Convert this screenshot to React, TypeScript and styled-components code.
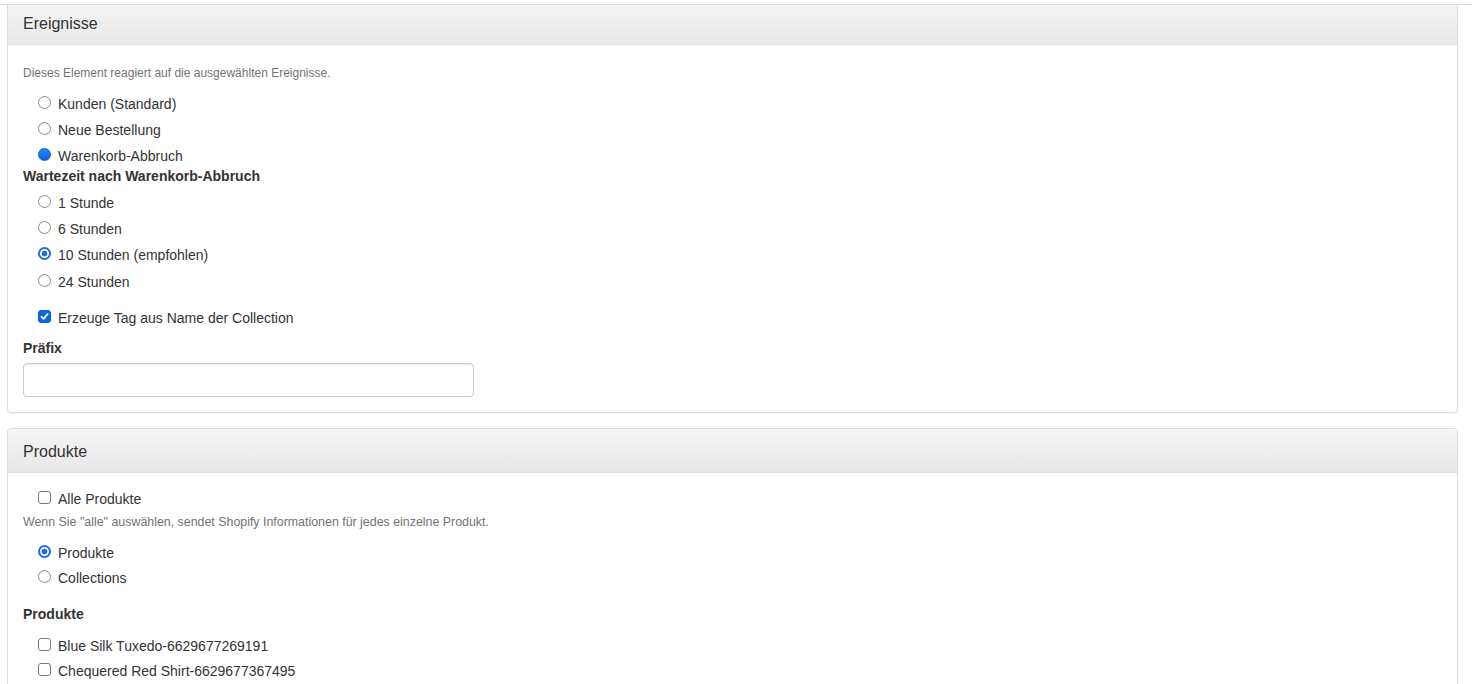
import styled, { createGlobalStyle } from "styled-components";

const GlobalStyle = createGlobalStyle`
    body {
        margin: 0;
        background: #fff;
        font-family: "Liberation Sans", Arial, sans-serif;
        font-size: 14px;
        color: #333;
    }
`;

const Page = styled.div`
    padding: 0 14px 0 7px;
`;

// thin white strip over the top of the page, the panel slides under it
const TopEdge = styled.div`
    position: fixed;
    top: 0;
    left: 0;
    right: 0;
    height: 4px;
    background: #fff;
    border-bottom: 1px solid #dcdcdc;
    z-index: 5;
`;

const Panel = styled.section`
    border: 1px solid #ddd;
    border-radius: 4px;
    margin-bottom: 15px;
    box-shadow: 0 1px 2px rgba(0, 0, 0, 0.05);
    background: #fff;
`;

const PanelHeading = styled.div`
    padding: 11px 15px 9px;
    border-bottom: 1px solid #ddd;
    border-radius: 3px 3px 0 0;
    background: linear-gradient(to bottom, #f5f5f5 0, #e8e8e8 100%);
`;

const PanelTitle = styled.h3`
    margin: 0;
    font-size: 16px;
    font-weight: normal;
    line-height: 23px;
    color: #333;
`;

const PanelBody = styled.div`
    padding: 15px;
    display: flex;
    flex-direction: column;
    align-items: flex-start;
`;

const HelpText = styled.p<{ $top?: number; $size?: number }>`
    box-sizing: border-box;
    margin: ${(p) => p.$top ?? 0}px 0 0;
    padding-top: 1px;
    height: 16px;
    font-size: ${(p) => p.$size ?? 12}px;
    line-height: 16px;
    color: #737373;
`;

const GroupLabel = styled.div<{ $top?: number }>`
    margin-top: ${(p) => p.$top ?? 0}px;
    font-weight: bold;
    line-height: 20px;
`;

const Option = styled.label<{ $top?: number }>`
    display: flex;
    align-items: center;
    gap: 7px;
    height: 20px;
    padding-left: 15px;
    margin-top: ${(p) => p.$top ?? 0}px;
    line-height: 20px;
    cursor: pointer;
`;

const OptionText = styled.span`
    margin-top: 1px;
`;

type RadioState = "off" | "on" | "filled";

const RadioMark = styled.span<{ $state: RadioState }>`
    box-sizing: border-box;
    width: 13px;
    height: 13px;
    border-radius: 50%;
    flex: none;
    margin-top: -1px;
    border: ${(p) => (p.$state === "off" ? "1px solid #8a8a8a" : p.$state === "on" ? "2px solid #1a6fe8" : "1px solid #0a5fd8")};
    background: ${(p) =>
        p.$state === "off"
            ? "#fff"
            : p.$state === "on"
            ? "radial-gradient(circle, #1a6fe8 0 2.6px, #fff 3.2px)"
            : "linear-gradient(to bottom, #2a86f7, #0a62e0)"};
`;

const CheckMark = styled.span<{ $checked?: boolean }>`
    box-sizing: border-box;
    width: 13px;
    height: 13px;
    border-radius: 3px;
    flex: none;
    margin-top: -1px;
    display: flex;
    align-items: center;
    justify-content: center;
    border: 1px solid ${(p) => (p.$checked ? "#0a62e0" : "#7a7a7a")};
    background: ${(p) => (p.$checked ? "#0b66e4" : "#fff")};
`;

const TextInput = styled.input`
    box-sizing: border-box;
    margin-top: 5px;
    width: 451px;
    height: 34px;
    padding: 6px 12px;
    border: 1px solid #ccc;
    border-radius: 4px;
    box-shadow: inset 0 1px 1px rgba(0, 0, 0, 0.075);
    font-family: inherit;
    font-size: 14px;
    color: #555;
    outline: none;
`;

function Radio({ state, label, top }: { state: RadioState; label: string; top?: number }) {
    return (
        <Option $top={top}>
            <RadioMark $state={state} />
            <OptionText>{label}</OptionText>
        </Option>
    );
}

function Check({ checked, label, top }: { checked?: boolean; label: string; top?: number }) {
    return (
        <Option $top={top}>
            <CheckMark $checked={checked}>
                {checked && (
                    <svg width="9" height="9" viewBox="0 0 9 9">
                        <polyline points="1.5,4.8 3.6,6.9 7.6,2" fill="none" stroke="#fff" strokeWidth="1.8" strokeLinecap="round" strokeLinejoin="round" />
                    </svg>
                )}
            </CheckMark>
            <OptionText>{label}</OptionText>
        </Option>
    );
}

export default function App() {
    return (
        <>
            <GlobalStyle />
            <TopEdge />
            <Page>
                <Panel>
                    <PanelHeading>
                        <PanelTitle>Ereignisse</PanelTitle>
                    </PanelHeading>
                    <PanelBody>
                        <HelpText $top={4}>Dieses Element reagiert auf die ausgewählten Ereignisse.</HelpText>
                        <Radio state="off" label="Kunden (Standard)" top={13} />
                        <Radio state="off" label="Neue Bestellung" top={6} />
                        <Radio state="filled" label="Warenkorb-Abbruch" top={6} />
                        <GroupLabel $top={1}>Wartezeit nach Warenkorb-Abbruch</GroupLabel>
                        <Radio state="off" label="1 Stunde" top={6} />
                        <Radio state="off" label="6 Stunden" top={6} />
                        <Radio state="on" label="10 Stunden (empfohlen)" top={6} />
                        <Radio state="off" label="24 Stunden" top={7} />
                        <Check checked label="Erzeuge Tag aus Name der Collection" top={16} />
                        <GroupLabel $top={11}>Präfix</GroupLabel>
                        <TextInput type="text" />
                    </PanelBody>
                </Panel>
                <Panel>
                    <PanelHeading>
                        <PanelTitle>Produkte</PanelTitle>
                    </PanelHeading>
                    <PanelBody>
                        <Check label="Alle Produkte" />
                        <HelpText $top={5} $size={12.4}>
                            Wenn Sie "alle" auswählen, sendet Shopify Informationen für jedes einzelne Produkt.
                        </HelpText>
                        <Radio state="on" label="Produkte" top={13} />
                        <Radio state="off" label="Collections" top={5} />
                        <GroupLabel $top={17}>Produkte</GroupLabel>
                        <Check label="Blue Silk Tuxedo-6629677269191" top={11} />
                        <Check label="Chequered Red Shirt-6629677367495" top={5} />
                    </PanelBody>
                </Panel>
            </Page>
        </>
    );
}
